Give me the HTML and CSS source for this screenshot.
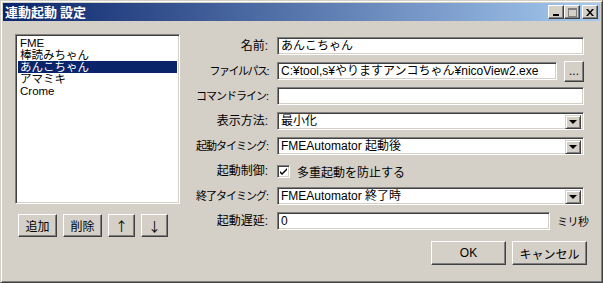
FILE: index.html
```html
<!DOCTYPE html>
<html>
<head>
    <meta charset="utf-8">
    <title>連動起動 設定</title>
    <link rel="stylesheet" href="styles.css">
</head>
<body>
<div class="window">
    <div class="titlebar">
        <span class="title">連動起動 設定</span>
        <div class="ctrls">
            <span class="cbtn"><svg width="8" height="7" viewBox="0 0 8 7"><rect x="1" y="5" width="6" height="2" fill="#000"/></svg></span>
            <span class="cbtn disabled"><svg width="9" height="9" viewBox="0 0 9 9"><rect x="0.5" y="0.5" width="8" height="8" fill="none" stroke="#808080"/><rect x="0" y="0" width="9" height="2" fill="#808080"/></svg></span>
            <span class="cbtn close"><svg width="8" height="7" viewBox="0 0 8 7"><path d="M0 0h2l2 2.5 2-2.5h2l-3 3.5 3 3.5h-2l-2-2.5-2 2.5h-2l3-3.5z" fill="#000"/></svg></span>
        </div>
    </div>

    <div class="content">
        <div class="left">
            <ul class="list">
                <li>FME</li>
                <li>棒読みちゃん</li>
                <li class="selected">あんこちゃん</li>
                <li>アマミキ</li>
                <li>Crome</li>
            </ul>
            <div class="listbtns">
                <button class="btn w39">追加</button>
                <button class="btn w39">削除</button>
                <button class="btn w27 arrow">↑</button>
                <button class="btn w27 arrow">↓</button>
            </div>
        </div>

        <div class="right">
            <div class="form">
                <label>名前:</label>
                <div class="field">あんこちゃん</div>

                <label class="kana narrow">ファイルパス:</label>
                <div class="pathrow">
                    <div class="field grow">C:¥tool,s¥やりますアンコちゃん¥nicoView2.exe</div>
                    <button class="btn dots">...</button>
                </div>

                <label class="kana">コマンドライン:</label>
                <div class="field"></div>

                <label>表示方法:</label>
                <div class="field select">最小化<span class="drop"></span></div>

                <label class="kana">起動タイミング:</label>
                <div class="field select">FMEAutomator 起動後<span class="drop"></span></div>

                <label>起動制御:</label>
                <div class="checkrow"><span class="check"><svg width="9" height="9" viewBox="0 0 9 9"><path d="M1 4l2 2 5-5v2l-5 5-2-2z" fill="#000"/></svg></span>多重起動を防止する</div>

                <label class="kana">終了タイミング:</label>
                <div class="field select">FMEAutomator 終了時<span class="drop"></span></div>

                <label>起動遅延:</label>
                <div class="delayrow">
                    <div class="field grow">0</div>
                    <span class="unit">ミリ秒</span>
                </div>
            </div>
            <div class="actions">
                <button class="btn big">OK</button>
                <button class="btn big">キャンセル</button>
            </div>
        </div>
    </div>
</div>
</body>
</html>
```

FILE: styles.css
```css
body {
    margin: 0;
    font-family: "Liberation Sans", "Noto Sans CJK JP", sans-serif;
    font-size: 12px;
    color: #000;
    background-color: #d4d0c8;
}

.window {
    width: 603px;
    height: 283px;
    box-sizing: border-box;
    background-color: #d4d0c8;
    border: 1px solid;
    border-color: #d4d0c8 #404040 #404040 #d4d0c8;
    box-shadow: inset 1px 1px #fff, inset -1px -1px #808080;
    padding: 2px;
    display: flex;
    flex-direction: column;
}

.titlebar {
    height: 18px;
    background: linear-gradient(to right, #0a246a, #a6caf0);
    display: flex;
    align-items: center;
    justify-content: space-between;
    padding: 0 2px 0 2px;
}

.titlebar .title {
    color: #fff;
    font-weight: bold;
    font-size: 13px;
    font-family: "Noto Sans CJK JP", sans-serif;
    line-height: 18px;
}

.ctrls {
    display: flex;
}

.cbtn {
    width: 16px;
    height: 14px;
    box-sizing: border-box;
    background-color: #d4d0c8;
    border: 1px solid;
    border-color: #fff #404040 #404040 #fff;
    box-shadow: inset -1px -1px #808080;
    display: flex;
    align-items: center;
    justify-content: center;
}

.cbtn.close {
    margin-left: 2px;
}

.content {
    flex: 1;
    display: flex;
    padding: 13px 13px 0 12px;
}

.left {
    width: 165px;
    display: flex;
    flex-direction: column;
}

.list {
    list-style: none;
    margin: 0;
    padding: 0;
    height: 170px;
    box-sizing: border-box;
    background-color: #fff;
    border: 1px solid;
    border-color: #808080 #fff #fff #808080;
    box-shadow: inset 1px 1px #404040, inset -1px -1px #d4d0c8;
    padding: 2px 2px;
}

.list li {
    height: 12px;
    line-height: 12px;
    font-size: 11.5px;
    padding-left: 2px;
    white-space: nowrap;
    overflow: hidden;
}

.list li.selected {
    background-color: #0a246a;
    color: #fff;
}

.listbtns {
    display: flex;
    gap: 6px;
    margin-top: 10px;
    padding-left: 3px;
}

.btn {
    font-family: "Liberation Sans", "Noto Sans CJK JP", sans-serif;
    font-size: 12px;
    height: 23px;
    padding: 0;
    box-sizing: border-box;
    background-color: #d4d0c8;
    color: #000;
    border: 1px solid;
    border-color: #fff #404040 #404040 #fff;
    box-shadow: inset -1px -1px #808080, inset 1px 1px #d4d0c8;
}

.btn.w39 {
    width: 39px;
}

.btn.w27 {
    width: 27px;
}

.btn.arrow {
    font-family: "Noto Sans CJK JP", sans-serif;
    font-size: 13px;
}

.btn.big {
    width: 75px;
    height: 24px;
}

.right {
    flex: 1;
    display: flex;
    flex-direction: column;
    padding-left: 10px;
}

.form {
    display: grid;
    grid-template-columns: 80px 1fr;
    grid-auto-rows: 18px;
    column-gap: 7px;
    row-gap: 7px;
    margin-top: 3px;
    margin-right: 3px;
    align-items: center;
}

.form label {
    text-align: right;
    white-space: nowrap;
    line-height: 18px;
    font-size: 12px;
    padding-right: 2px;
}

.form label.kana {
    font-size: 11px;
    letter-spacing: -1px;
}

.form label.narrow {
    letter-spacing: -1.5px;
}

.field {
    height: 18px;
    box-sizing: border-box;
    background-color: #fff;
    border: 1px solid;
    border-color: #808080 #fff #fff #808080;
    box-shadow: inset 1px 1px #404040, inset -1px -1px #d4d0c8;
    padding: 0 3px;
    line-height: 16px;
    white-space: nowrap;
    overflow: hidden;
    position: relative;
}

.field.grow {
    flex: 1;
}

.pathrow,
.delayrow {
    display: flex;
    align-items: center;
}

.btn.dots {
    width: 20px;
    height: 21px;
    margin-left: 7px;
    line-height: 10px;
}

.unit {
    margin-left: 7px;
    width: 27px;
    white-space: nowrap;
    font-size: 11px;
    letter-spacing: -0.5px;
}

.drop {
    position: absolute;
    top: 2px;
    right: 2px;
    width: 16px;
    height: 14px;
    box-sizing: border-box;
    background-color: #d4d0c8;
    border: 1px solid;
    border-color: #d4d0c8 #404040 #404040 #d4d0c8;
    box-shadow: inset 1px 1px #fff, inset -1px -1px #808080;
}

.drop::after {
    content: "";
    position: absolute;
    left: 3px;
    top: 4px;
    border-left: 4px solid transparent;
    border-right: 4px solid transparent;
    border-top: 4px solid #000;
}

.checkrow {
    display: flex;
    align-items: center;
    gap: 7px;
}

.check {
    width: 13px;
    height: 13px;
    box-sizing: border-box;
    background-color: #fff;
    border: 1px solid;
    border-color: #808080 #fff #fff #808080;
    box-shadow: inset 1px 1px #404040, inset -1px -1px #d4d0c8;
    display: flex;
    align-items: center;
    justify-content: center;
}

.actions {
    display: flex;
    justify-content: flex-end;
    gap: 6px;
    margin-top: 11px;
}
```
